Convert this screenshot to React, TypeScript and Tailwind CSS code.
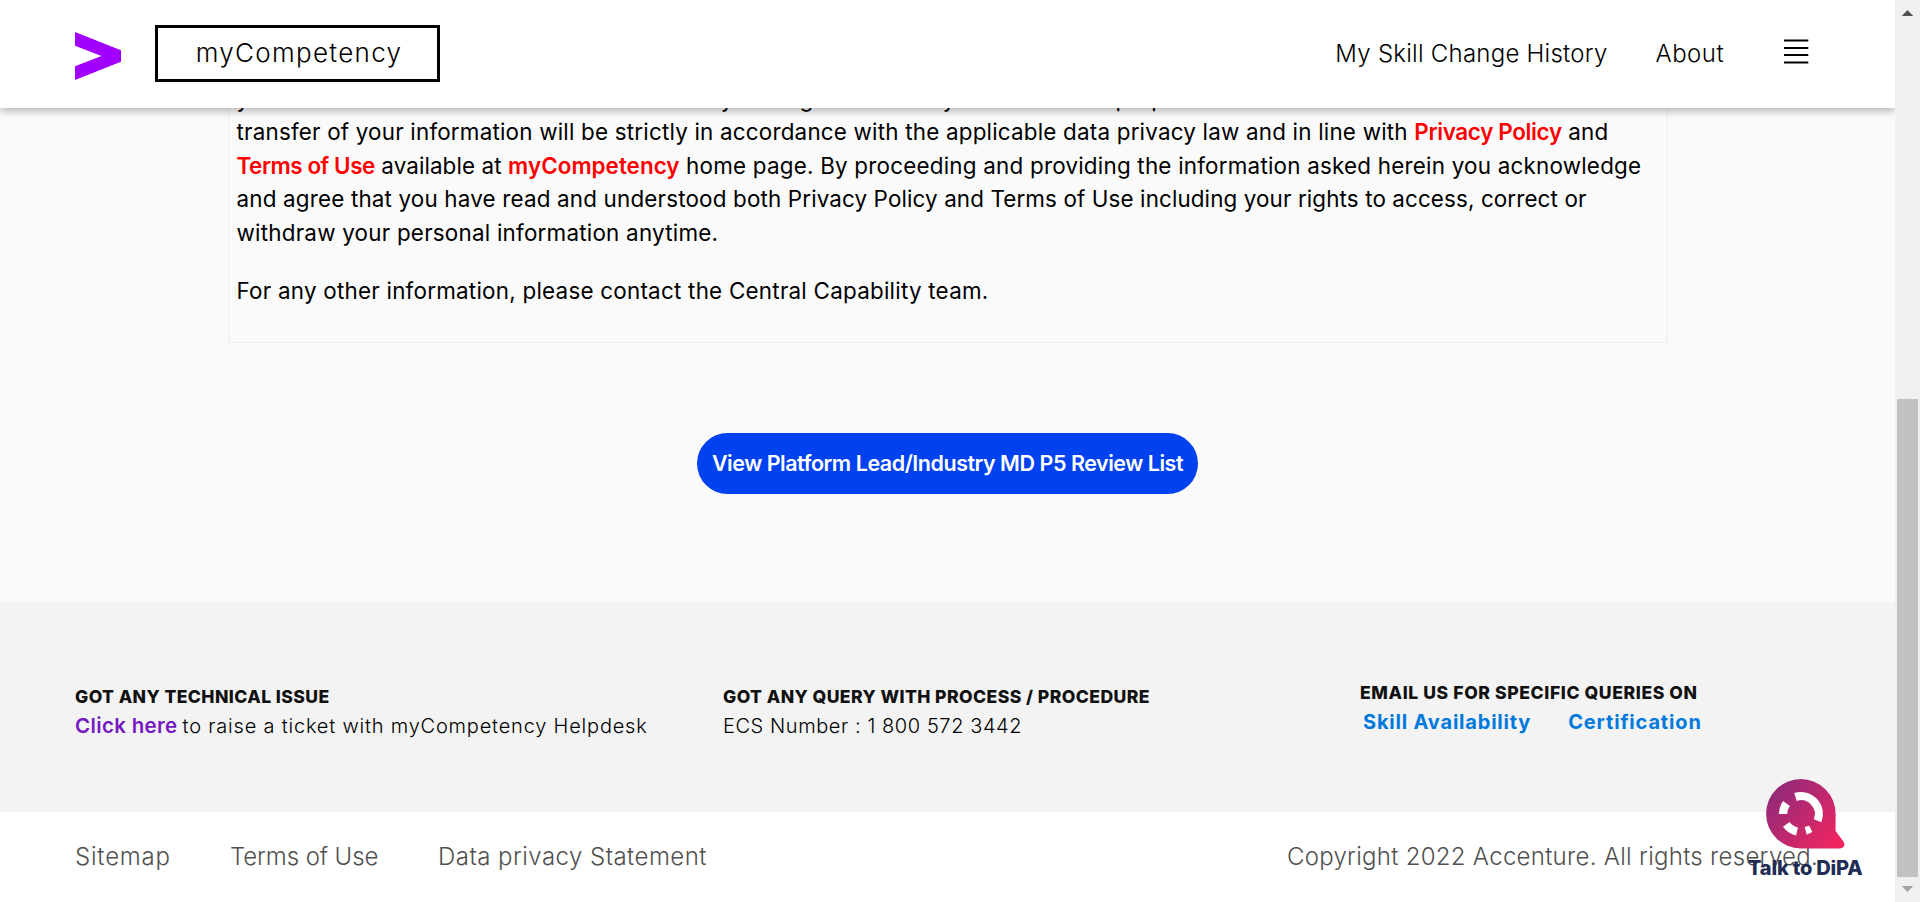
import React from "react";

function Logo() {
  return (
    <svg className="h-12 w-[46px] shrink-0" viewBox="0 0 46 48">
      <path d="M0 0L46 18.2V29.8L0 48V34.3L26.5 24L0 13.7Z" fill="#a100ff" />
    </svg>
  );
}

function MenuIcon() {
  return (
    <svg className="h-[26px] w-[25px] shrink-0" viewBox="0 0 25 26">
      <path d="M0 2.5H24.3M0 10H24.3M0 17H24.3M0 24.5H24.3" stroke="#000" strokeWidth="2" />
    </svg>
  );
}

function Header() {
  return (
    <header className="relative z-10 flex h-[108px] shrink-0 items-center bg-white pb-px pl-[75px] pr-[86px] shadow-[0_3px_8px_rgba(0,0,0,0.28)]">
      <div className="pt-[5px]">
        <Logo />
      </div>
      <div className="ml-[34px] flex h-[57px] w-[285px] items-center justify-center whitespace-nowrap border-[3px] border-black pb-0.5 pl-[3px] text-[26px] font-light tracking-[1.3px] text-black">
        myCompetency
      </div>
      <nav className="ml-auto flex items-center whitespace-nowrap text-2xl font-light text-black">
        <a className="tracking-[0.25px]">My Skill Change History</a>
        <a className="ml-12 tracking-[0.45px]">About</a>
        <a className="ml-[60px] pb-1.5">
          <MenuIcon />
        </a>
      </nav>
    </header>
  );
}

function Notice() {
  return (
    <section className="mx-auto h-[262px] w-[1440px] whitespace-nowrap border border-t-0 border-[#eeeeee] px-2 pt-[0.5px] text-[22.4px] leading-[33.6px] text-black">
      <p>
        <span className="flex">
          <span className="w-[471px]">your information will be collected</span>
          <span className="w-[203px]">by storing the data</span>
          <span className="w-[205px]">only for those limited</span>
          <span>purposes and this</span>
        </span>
        <span className="block tracking-[0.205px]">
          transfer of your information will be strictly in accordance with the applicable data privacy law and in line with{" "}
          <b className="font-semibold tracking-[-0.33px] text-[#ff0000]">Privacy Policy</b> and
        </span>
        <span className="block tracking-[0.222px]">
          <b className="font-semibold tracking-[-0.43px] text-[#ff0000]">Terms of Use</b>{" "}
          <span className="tracking-[0.094px]">available at</span>{" "}
          <b className="font-semibold tracking-[0.044px] text-[#ff0000]">myCompetency</b> home page. By proceeding and
          providing the information asked herein you acknowledge
        </span>
        <span className="block tracking-[0.12px]">
          <span className="tracking-[0.18px]">and agree that you have read and understood both</span> Privacy Policy and
          Terms of Use including your rights to access, correct or
        </span>
        <span className="block tracking-[0.231px]">withdraw your personal information anytime.</span>
      </p>
      <p className="mt-[25px] tracking-[0.241px]">
        For any other information, please contact the Central Capability team.
      </p>
    </section>
  );
}

function Support() {
  return (
    <section className="flex h-[210px] shrink-0 whitespace-nowrap bg-[#f3f3f3] pl-[75px] text-xl leading-[32px] text-black">
      <div className="w-[648px] pt-[81px]">
        <h2 className="text-[17.6px] font-extrabold leading-[27px] tracking-[0.41px] text-[#111]">
          GOT ANY TECHNICAL ISSUE
        </h2>
        <p className="font-light tracking-[0.8px]">
          <a className="text-[20.5px] font-semibold tracking-[0.35px] text-[#7519c1]">Click here</a>
          <span className="ml-[5px]">to raise a ticket with myCompetency Helpdesk</span>
        </p>
      </div>
      <div className="w-[637px] pt-[81px]">
        <h2 className="text-[17.6px] font-extrabold leading-[27px] tracking-[0.42px] text-[#111]">
          GOT ANY QUERY WITH PROCESS / PROCEDURE
        </h2>
        <p className="font-light tracking-[0.579px]">ECS Number : 1 800 572 3442</p>
      </div>
      <div className="pt-[77px]">
        <h2 className="text-[17.6px] font-extrabold leading-[27px] tracking-[0.59px] text-[#111]">
          EMAIL US FOR SPECIFIC QUERIES ON
        </h2>
        <p className="flex gap-[37px] pl-[3px] font-bold text-[#0079dd]">
          <a className="tracking-[0.8px]">Skill Availability</a>
          <a className="tracking-[0.84px]">Certification</a>
        </p>
      </div>
    </section>
  );
}

function Legal() {
  return (
    <section className="flex h-[90px] shrink-0 items-center whitespace-nowrap bg-white pl-[75px] pr-[77px] text-2xl font-light text-[#505050]">
      <a className="w-[155px] tracking-[0.8px]">Sitemap</a>
      <a className="w-[208px] tracking-[-0.1px]">Terms of Use</a>
      <a className="tracking-[0.467px]">Data privacy Statement</a>
      <span className="ml-auto tracking-[0.277px]">Copyright 2022 Accenture. All rights reserved.</span>
    </section>
  );
}

function ChatWidget() {
  return (
    <div className="absolute left-[1748px] top-[779px] z-20 w-[116px]">
      <svg className="ml-[18px] h-[70px] w-[79px]" viewBox="0 0 79 70">
        <defs>
          <linearGradient id="bubble" x1="6" y1="10" x2="70" y2="66" gradientUnits="userSpaceOnUse">
            <stop offset="0" stopColor="#8f2a7b" />
            <stop offset="1" stopColor="#f02560" />
          </linearGradient>
        </defs>
        <path
          d="M34.8 0A34.8 34.8 0 0 1 69.6 34.8V52L77.4 62.5C79.6 66 78 69.4 74 69.4H34.8A34.7 34.7 0 0 1 34.8 0Z"
          fill="url(#bubble)"
        />
        <g fill="none" stroke="#fff" strokeWidth="8.2">
          <path d="M29.5 18A17.9 17.9 0 0 1 51.6 41.7" />
          <path d="M17.1 35A17.9 17.9 0 0 1 20.5 24.5" />
          <path d="M20.3 45.3A17.9 17.9 0 0 0 31 52.4" />
        </g>
        <path d="M38.7 47.9L43.3 46.7L46.3 53L40.7 55.7Z" fill="#fff" />
      </svg>
      <div className="-mt-px whitespace-nowrap text-xl font-extrabold leading-10 tracking-[-0.2px] text-[#1f2d54]">
        Talk to DiPA
      </div>
    </div>
  );
}

function Scrollbar() {
  return (
    <div className="flex h-[902px] w-[25px] shrink-0 flex-col items-center bg-[#f0f0f0]">
      <svg className="h-[399px] w-[25px]" viewBox="0 0 25 399">
        <path d="M6.8 16L12.5 10L18.2 16Z" fill="#505050" />
      </svg>
      <div className="h-[478px] w-[21px] bg-[#c1c1c1]" />
      <svg className="h-[25px] w-[25px]" viewBox="0 0 25 25">
        <path d="M6.8 9L12.5 15L18.2 9Z" fill="#a3a3a3" />
      </svg>
    </div>
  );
}

export default function App() {
  return (
    <div className="relative flex h-[902px] w-[1920px] overflow-hidden bg-[#fafafa] font-['Inter',sans-serif]">
      <div className="flex w-[1895px] shrink-0 flex-col overflow-hidden">
        <Header />
        <main className="-mt-[27px] h-[521px] shrink-0">
          <Notice />
          <div className="flex justify-center pt-[90px]">
            <button className="h-[61px] w-[501px] whitespace-nowrap rounded-full bg-[#0041f0] pb-px text-[21.5px] font-semibold tracking-[-0.47px] text-white">
              View Platform Lead/Industry MD P5 Review List
            </button>
          </div>
        </main>
        <Support />
        <Legal />
      </div>
      <Scrollbar />
      <ChatWidget />
    </div>
  );
}
